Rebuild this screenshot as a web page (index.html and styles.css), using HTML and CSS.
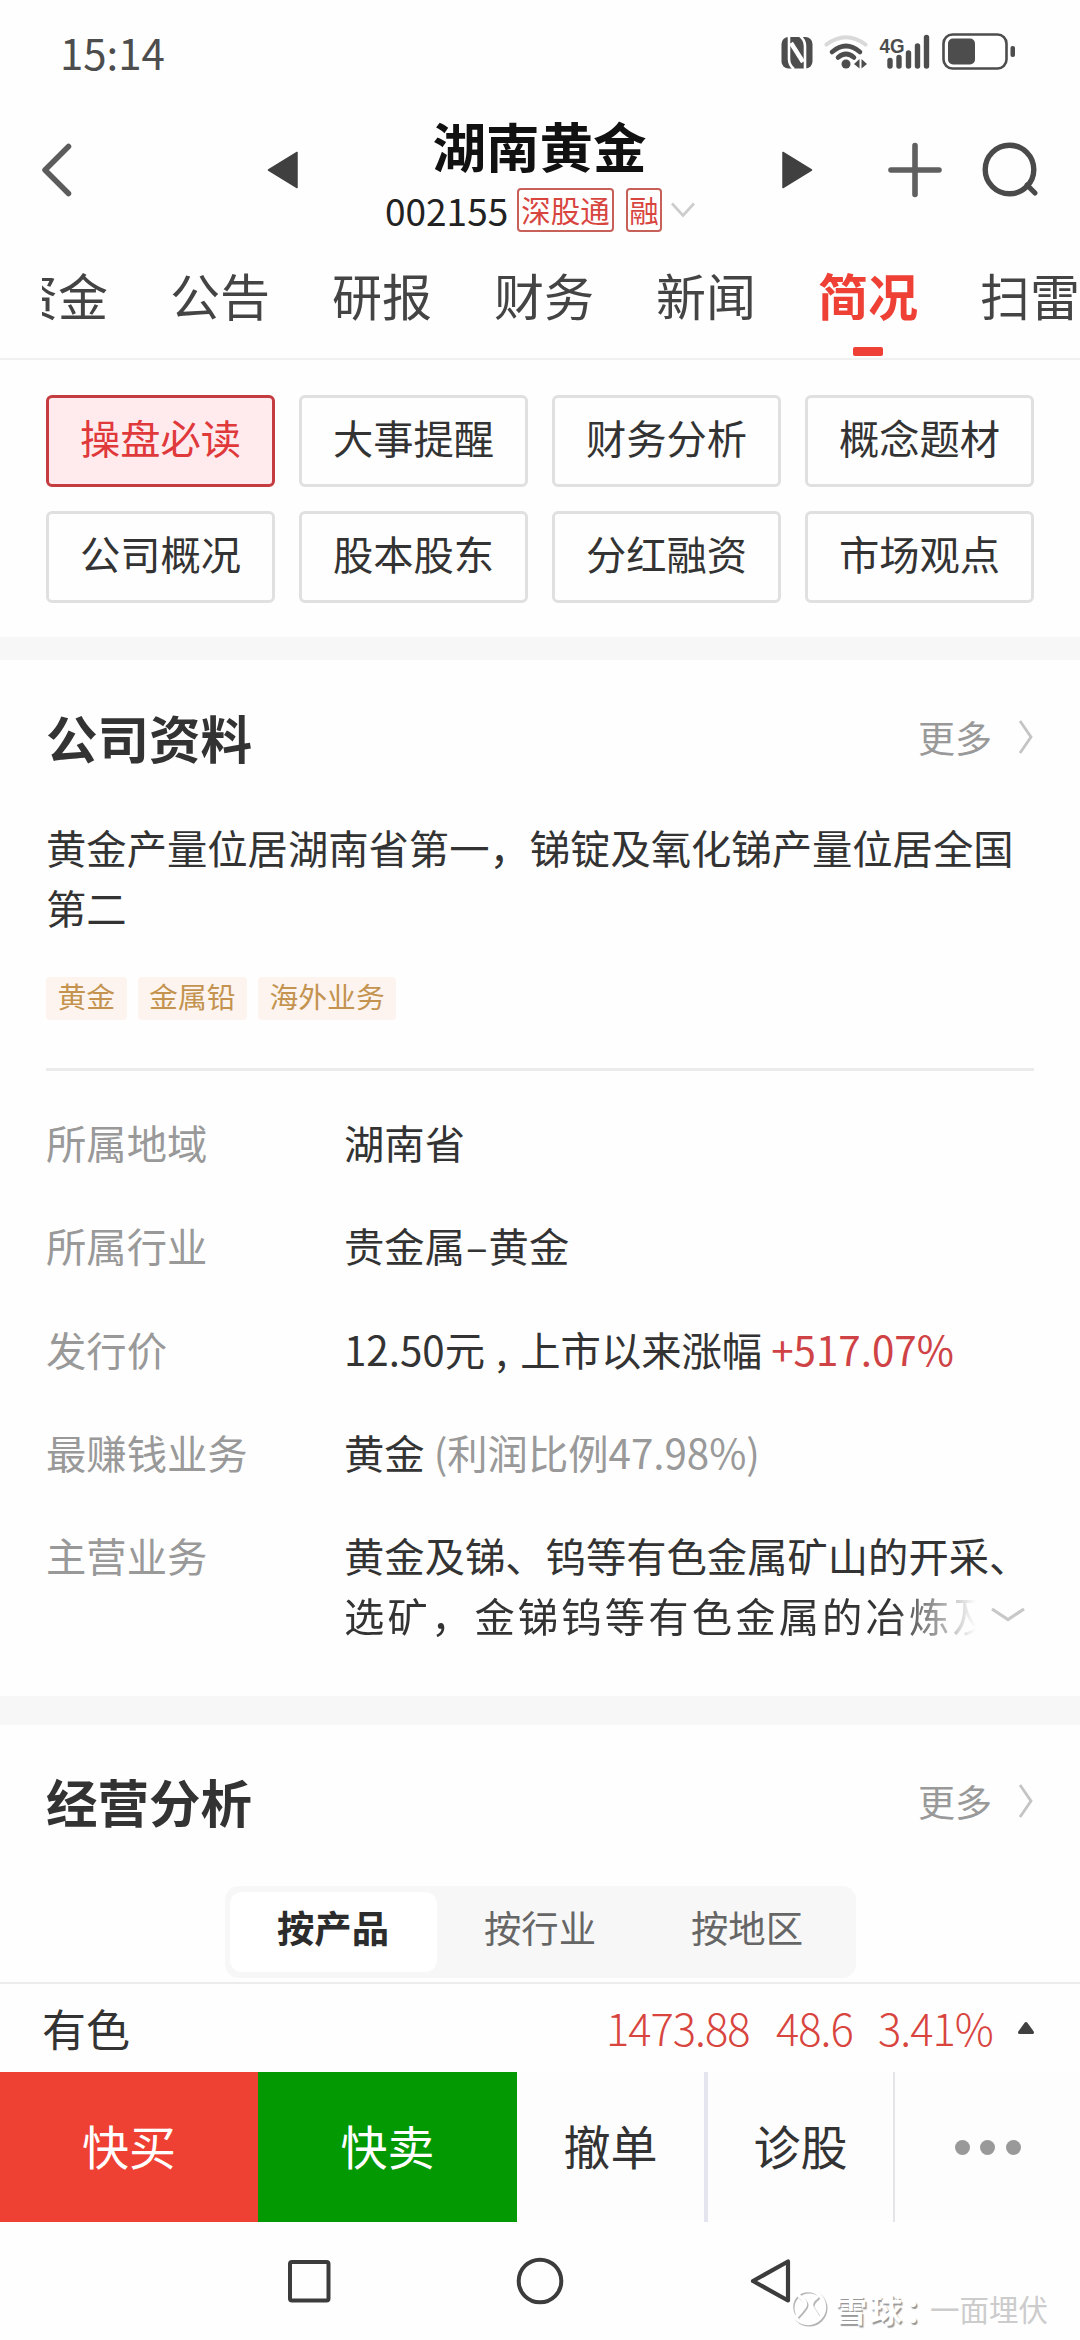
FILE: index.html
```html
<!DOCTYPE html>
<html lang="zh-CN">
<head>
<meta charset="utf-8">
<title>湖南黄金 002155</title>
<link rel="stylesheet" href="styles.css">
</head>
<body>
<div class="screen">
  <div class="status">
    <span class="clock">15:14</span>
    <svg class="status-icons" width="236" height="40" viewBox="780 32 236 40">
      <rect x="781.5" y="37" width="31" height="31.500" rx="7" fill="#4d4d4d"/>
      <path d="M789 36V59Q789 65 794 69" fill="none" stroke="#fff" stroke-width="2.600"/>
      <path d="M805 69.500V46Q805 40 800 36" fill="none" stroke="#fff" stroke-width="2.600"/>
      <path d="M791 43L803 62" stroke="#fff" stroke-width="4.500"/>
      <g fill="none" stroke-linecap="round">
        <path d="M826.500 44.500Q846 30 865.500 44.500" stroke="#d9d9d9" stroke-width="4"/>
        <path d="M832 52Q846 40 860 52" stroke="#4d4d4d" stroke-width="4.600"/>
        <path d="M838 57.500Q846 50.500 854 57.500" stroke="#4d4d4d" stroke-width="4.600"/>
      </g>
      <circle cx="846" cy="64" r="4.500" fill="#4d4d4d"/>
      <path d="M854 64L859.500 59V68.500ZM867 64L861.500 59V68.500Z" fill="#4d4d4d"/>
      <text x="879.500" y="52.500" class="net" textLength="25" lengthAdjust="spacingAndGlyphs">4G</text>
      <g stroke="#4d4d4d" stroke-width="5.400" stroke-linecap="round">
        <path d="M890 60.500V66M899 57.500V66M908.500 53V66M917.500 46V66M926.500 37.500V66"/>
      </g>
      <rect x="943.500" y="34.500" width="63" height="34" rx="9" fill="#fff" stroke="#4d4d4d" stroke-width="2.600"/>
      <rect x="948" y="38.500" width="27" height="26" rx="5" fill="#4d4d4d"/>
      <rect x="1010.500" y="46" width="4.500" height="11" rx="2" fill="#4d4d4d"/>
    </svg>
  </div>

  <header class="head">
    <svg class="back" width="32" height="54" viewBox="0 0 32 54"><path d="M27.500 3.500L4 27L27.500 50.500" fill="none" stroke="#5c5c5c" stroke-width="5.500" stroke-linecap="round" stroke-linejoin="round"/></svg>
    <svg class="prev" width="32" height="40" viewBox="0 0 32 40"><path d="M30 2.500V37.500L1.500 20Z" fill="#404040" stroke="#404040" stroke-width="1.500" stroke-linejoin="round"/></svg>
    <div class="stock">
      <h1>湖南黄金</h1>
      <div class="code">
        <span class="num">002155</span><span class="mark">深股通</span><span class="mark single">融</span>
        <svg width="26" height="18" viewBox="0 0 26 18"><path d="M2 2.500L13 14.500L24 2.500" fill="none" stroke="#ccc" stroke-width="2.600"/></svg>
      </div>
    </div>
    <svg class="next" width="32" height="40" viewBox="0 0 32 40"><path d="M2 2.500V37.500L30.500 20Z" fill="#404040" stroke="#404040" stroke-width="1.500" stroke-linejoin="round"/></svg>
    <svg class="add" width="56" height="56" viewBox="0 0 56 56"><path d="M28 3.500V52.500M4 28H52" stroke="#606060" stroke-width="5.600" stroke-linecap="round"/></svg>
    <svg class="search" width="58" height="58" viewBox="0 0 58 58"><circle cx="28.500" cy="28.500" r="24.300" fill="none" stroke="#4a4a4a" stroke-width="5.400"/><path d="M46 44L54 52" stroke="#4a4a4a" stroke-width="5.200" stroke-linecap="round"/></svg>
  </header>

  <nav class="tabs">
    <a>资金</a><a>公告</a><a>研报</a><a>财务</a><a>新闻</a><a class="on">简况</a><a>扫雷</a>
  </nav>

  <div class="chips">
    <a class="on">操盘必读</a><a>大事提醒</a><a>财务分析</a><a>概念题材</a>
    <a>公司概况</a><a>股本股东</a><a>分红融资</a><a>市场观点</a>
  </div>

  <section class="company">
    <div class="title">
      <h2>公司资料</h2>
      <a class="more">更多<svg width="16" height="36" viewBox="0 0 16 36"><path d="M2 2L13 18L2 34" fill="none" stroke="#c4c4c4" stroke-width="2.800"/></svg></a>
    </div>
    <p class="intro">黄金产量位居湖南省第一，锑锭及氧化锑产量位居全国<br>第二</p>
    <div class="tags"><span>黄金</span><span>金属铅</span><span>海外业务</span></div>
    <dl class="facts">
      <dt>所属地域</dt><dd>湖南省</dd>
      <dt>所属行业</dt><dd>贵金属<span class="dash">–</span>黄金</dd>
      <dt>发行价</dt><dd>12.50元<span class="comma"> , </span>上市以来涨幅 <span class="up">+517.07%</span></dd>
      <dt>最赚钱业务</dt><dd>黄金 <span class="dim">(利润比例47.98%)</span></dd>
      <dt>主营业务</dt>
      <dd>黄金及锑、钨等有色金属矿山的开采、
        <div class="rest"><span class="fade">选矿，金锑钨等有色金属的冶炼及</span><svg width="36" height="18" viewBox="0 0 36 18"><path d="M2 3L18 13.500L34 3" fill="none" stroke="#c8c8c8" stroke-width="3.200"/></svg></div>
      </dd>
    </dl>
  </section>

  <section class="analysis">
    <div class="title">
      <h2>经营分析</h2>
      <a class="more">更多<svg width="16" height="36" viewBox="0 0 16 36"><path d="M2 2L13 18L2 34" fill="none" stroke="#c4c4c4" stroke-width="2.800"/></svg></a>
    </div>
    <div class="segment"><a class="on">按产品</a><a>按行业</a><a>按地区</a></div>
  </section>

  <div class="ticker">
    <span class="sector">有色</span>
    <span class="quote q1">1473.88</span><span class="quote q2">48.6</span><span class="quote q3">3.41%</span>
    <svg width="18" height="14" viewBox="0 0 18 14"><path d="M9 2.500L15.500 11.500H2.500Z" fill="#404040" stroke="#404040" stroke-width="3" stroke-linejoin="round"/></svg>
  </div>

  <div class="actions">
    <a class="buy">快买</a><a class="sell">快卖</a><a class="cancel">撤单</a><a class="diagnose">诊股</a>
    <a class="dots"><i></i><i></i><i></i></a>
  </div>

  <div class="system">
    <svg width="50" height="50" viewBox="0 0 50 50"><rect x="6" y="6" width="38.500" height="38.500" rx="2" fill="none" stroke="#3c3c3c" stroke-width="4"/></svg>
    <svg width="50" height="50" viewBox="0 0 50 50"><circle cx="25" cy="25" r="21.300" fill="none" stroke="#3c3c3c" stroke-width="4"/></svg>
    <svg width="50" height="50" viewBox="0 0 50 50"><path d="M42 5.500V44.500L7 25Z" fill="none" stroke="#3c3c3c" stroke-width="4.200" stroke-linejoin="round"/></svg>
  </div>

  <div class="watermark">
    <svg width="42" height="42" viewBox="0 0 42 42">
      <g fill="none" stroke-linecap="round">
        <g stroke="#b5b5b5" stroke-width="3.400" transform="translate(1.300 1.300)"><circle cx="20" cy="20" r="16.500"/><path d="M11 9Q20 15 16.500 20T9 29M29 10Q21 16 24.500 21T30 30"/></g>
        <g stroke="#fff" stroke-width="3.400"><circle cx="20" cy="20" r="16.500"/><path d="M11 9Q20 15 16.500 20T9 29M29 10Q21 16 24.500 21T30 30"/></g>
      </g>
    </svg>
    <span class="brand">雪球：</span><span class="author">一面埋伏</span>
  </div>
</div>
</body>
</html>
```
FILE: styles.css
```css
* { box-sizing: border-box; margin: 0; padding: 0; }

body {
  background: #fefefe;
  color: #333;
  font-family: "Noto Sans CJK SC", "Noto Sans", sans-serif;
}

svg { display: block; flex: none; }

.screen {
  position: relative;
  display: flex;
  flex-direction: column;
  width: 1080px;
  height: 2340px;
  overflow: hidden;
}

/* status bar */
.status {
  display: flex;
  justify-content: space-between;
  height: 104px;
  padding: 32px 64px 0 60px;
}
.clock { font-size: 42px; line-height: 40px; color: #4d4d4d; }
.net { font: 700 21px "Liberation Sans", sans-serif; fill: #4d4d4d; }

/* header */
.head {
  display: flex;
  height: 144px;
  padding-left: 41px;
}
.back { margin-top: 39px; }
.prev { margin: 46px 0 0 194px; }
.stock { width: 484px; text-align: center; }
.stock h1 {
  font-size: 53.500px;
  line-height: 60px;
  margin-top: 11px;
  color: #111;
  padding-right: 3px;
}
.code {
  display: flex;
  align-items: center;
  height: 44px;
  margin: 13px 0 0 86px;
}
.num { width: 132px; text-align: left; font-size: 37px; line-height: 44px; color: #222; }
.mark {
  width: 97px;
  height: 44px;
  border: 2px solid #c8605a;
  border-radius: 4px;
  font-size: 29.500px;
  line-height: 38px;
  color: #d8453f;
}
.single { width: 36px; margin-right: 8px; margin-left: 12px; }
.next { margin: 46px 0 0 -2px; }
.add { margin: 38px 0 0 74px; }
.search { margin: 37px 0 0 38px; }

/* tabs */
.tabs {
  display: flex;
  gap: 62px;
  height: 110px;
  margin-left: 42px;
  overflow: hidden;
  font-size: 50px;
  line-height: 92px;
  color: #444;
}
.tabs a { flex: none; width: 100px; }
.tabs a:first-child { margin-left: -34px; }
.tabs .on { color: #ee4035; font-weight: 700; }
.tabs .on::after {
  content: "";
  display: block;
  width: 30px;
  height: 9px;
  margin: 7px auto 0;
  border-radius: 2px;
  background: #ee4035;
}

/* shortcut grid */
.chips {
  display: grid;
  grid-template-columns: repeat(4, 1fr);
  grid-auto-rows: 92px;
  gap: 24px;
  height: 302px;
  padding: 35px 46px 0;
  border-top: 2px solid #f0f0f0;
  border-bottom: 23px solid #f7f7f7;
}
.chips a {
  border: 3px solid #e0e0e0;
  border-radius: 6px;
  text-align: center;
  font-size: 40.300px;
  line-height: 78px;
}
.chips .on { border-color: #c43c40; background: #ffebee; color: #e0393b; }

/* section titles */
.title { display: flex; justify-content: space-between; height: 76px; }
.title h2 { font-size: 51.500px; line-height: 76px; }
.more {
  display: flex;
  align-items: center;
  gap: 26px;
  font-size: 37px;
  line-height: 76px;
  color: #999;
}

/* company profile */
.company {
  height: 1065px;
  padding: 39px 46px 0;
  border-bottom: 29px solid #f7f7f7;
}
.intro { margin-top: 42px; font-size: 40.320px; line-height: 60px; }
.tags { display: flex; gap: 11px; margin-top: 40px; }
.tags span {
  height: 43px;
  padding: 0 11.500px;
  border-radius: 4px;
  background: #fdf3ef;
  color: #c3934f;
  font-size: 28.800px;
  line-height: 38px;
}
.facts {
  display: grid;
  grid-template-columns: 298px 1fr;
  row-gap: 43.300px;
  margin-top: 48px;
  padding-top: 41px;
  border-top: 3px solid #ebebeb;
  font-size: 40.320px;
  line-height: 60px;
  white-space: nowrap;
}
.facts dt, .dim { color: #999; }
.dash { margin: 0 1px; }
.comma { letter-spacing: 2px; }
.up { color: #cf4245; }
.rest { display: flex; align-items: center; gap: 14px; }
.fade {
  width: 632px;
  overflow: hidden;
  letter-spacing: 3.150px;
  -webkit-mask-image: linear-gradient(90deg, #000 550px, transparent 632px);
  mask-image: linear-gradient(90deg, #000 550px, transparent 632px);
}

/* business analysis */
.analysis { height: 257px; padding: 38px 46px 0; }
.segment {
  display: flex;
  width: 631px;
  height: 92px;
  margin: 47px auto 0;
  padding: 6px 5px;
  border-radius: 14px;
  background: #f7f7f7;
}
.segment a {
  flex: 1;
  text-align: center;
  font-size: 37.400px;
  line-height: 71px;
  color: #666;
}
.segment .on { height: 80px; border-radius: 12px; background: #fff; color: #2c2c2c; font-weight: 700; }

/* sector ticker */
.ticker {
  display: flex;
  align-items: center;
  height: 90px;
  padding-left: 42px;
  border-top: 2px solid #ececec;
}
.sector { width: 564px; font-size: 44px; line-height: 88px; }
.quote { font-size: 43.500px; line-height: 88px; letter-spacing: -1px; color: #d8453f; font-weight: 300; }
.q1 { width: 170px; }
.q2 { width: 102px; }
.q3 { width: 139px; }

/* trading actions */
.actions { display: flex; height: 150px; background: #fdfdfe; }
.actions a { height: 150px; text-align: center; font-size: 47px; line-height: 145px; }
.buy { width: 258px; background: #ee4133; color: #fff; }
.sell { width: 259px; background: #029902; color: #fff; }
.cancel { width: 191px; border-right: 4px solid #e4e5ee; }
.diagnose { width: 187px; border-right: 2px solid #e4e4ea; }
.actions .dots { display: flex; flex: 1; align-items: center; justify-content: center; gap: 10.500px; }
.dots i { width: 15px; height: 15px; border-radius: 50%; background: #999; }

/* system navigation */
.system {
  display: flex;
  gap: 181px;
  height: 118px;
  padding: 34px 0 0 284px;
}

.watermark {
  position: absolute;
  left: 788px;
  top: 2287px;
  display: flex;
  align-items: center;
  height: 42px;
  white-space: nowrap;
}
.brand {
  width: 99px;
  margin-left: 5px;
  font-size: 32px;
  letter-spacing: 3px;
  line-height: 36px;
  font-weight: 700;
  color: #fff;
  text-shadow: 1.500px 1.500px 1px #999;
}
.author { margin-left: -4px; font-size: 29.500px; line-height: 36px; color: #ccc; }
```
